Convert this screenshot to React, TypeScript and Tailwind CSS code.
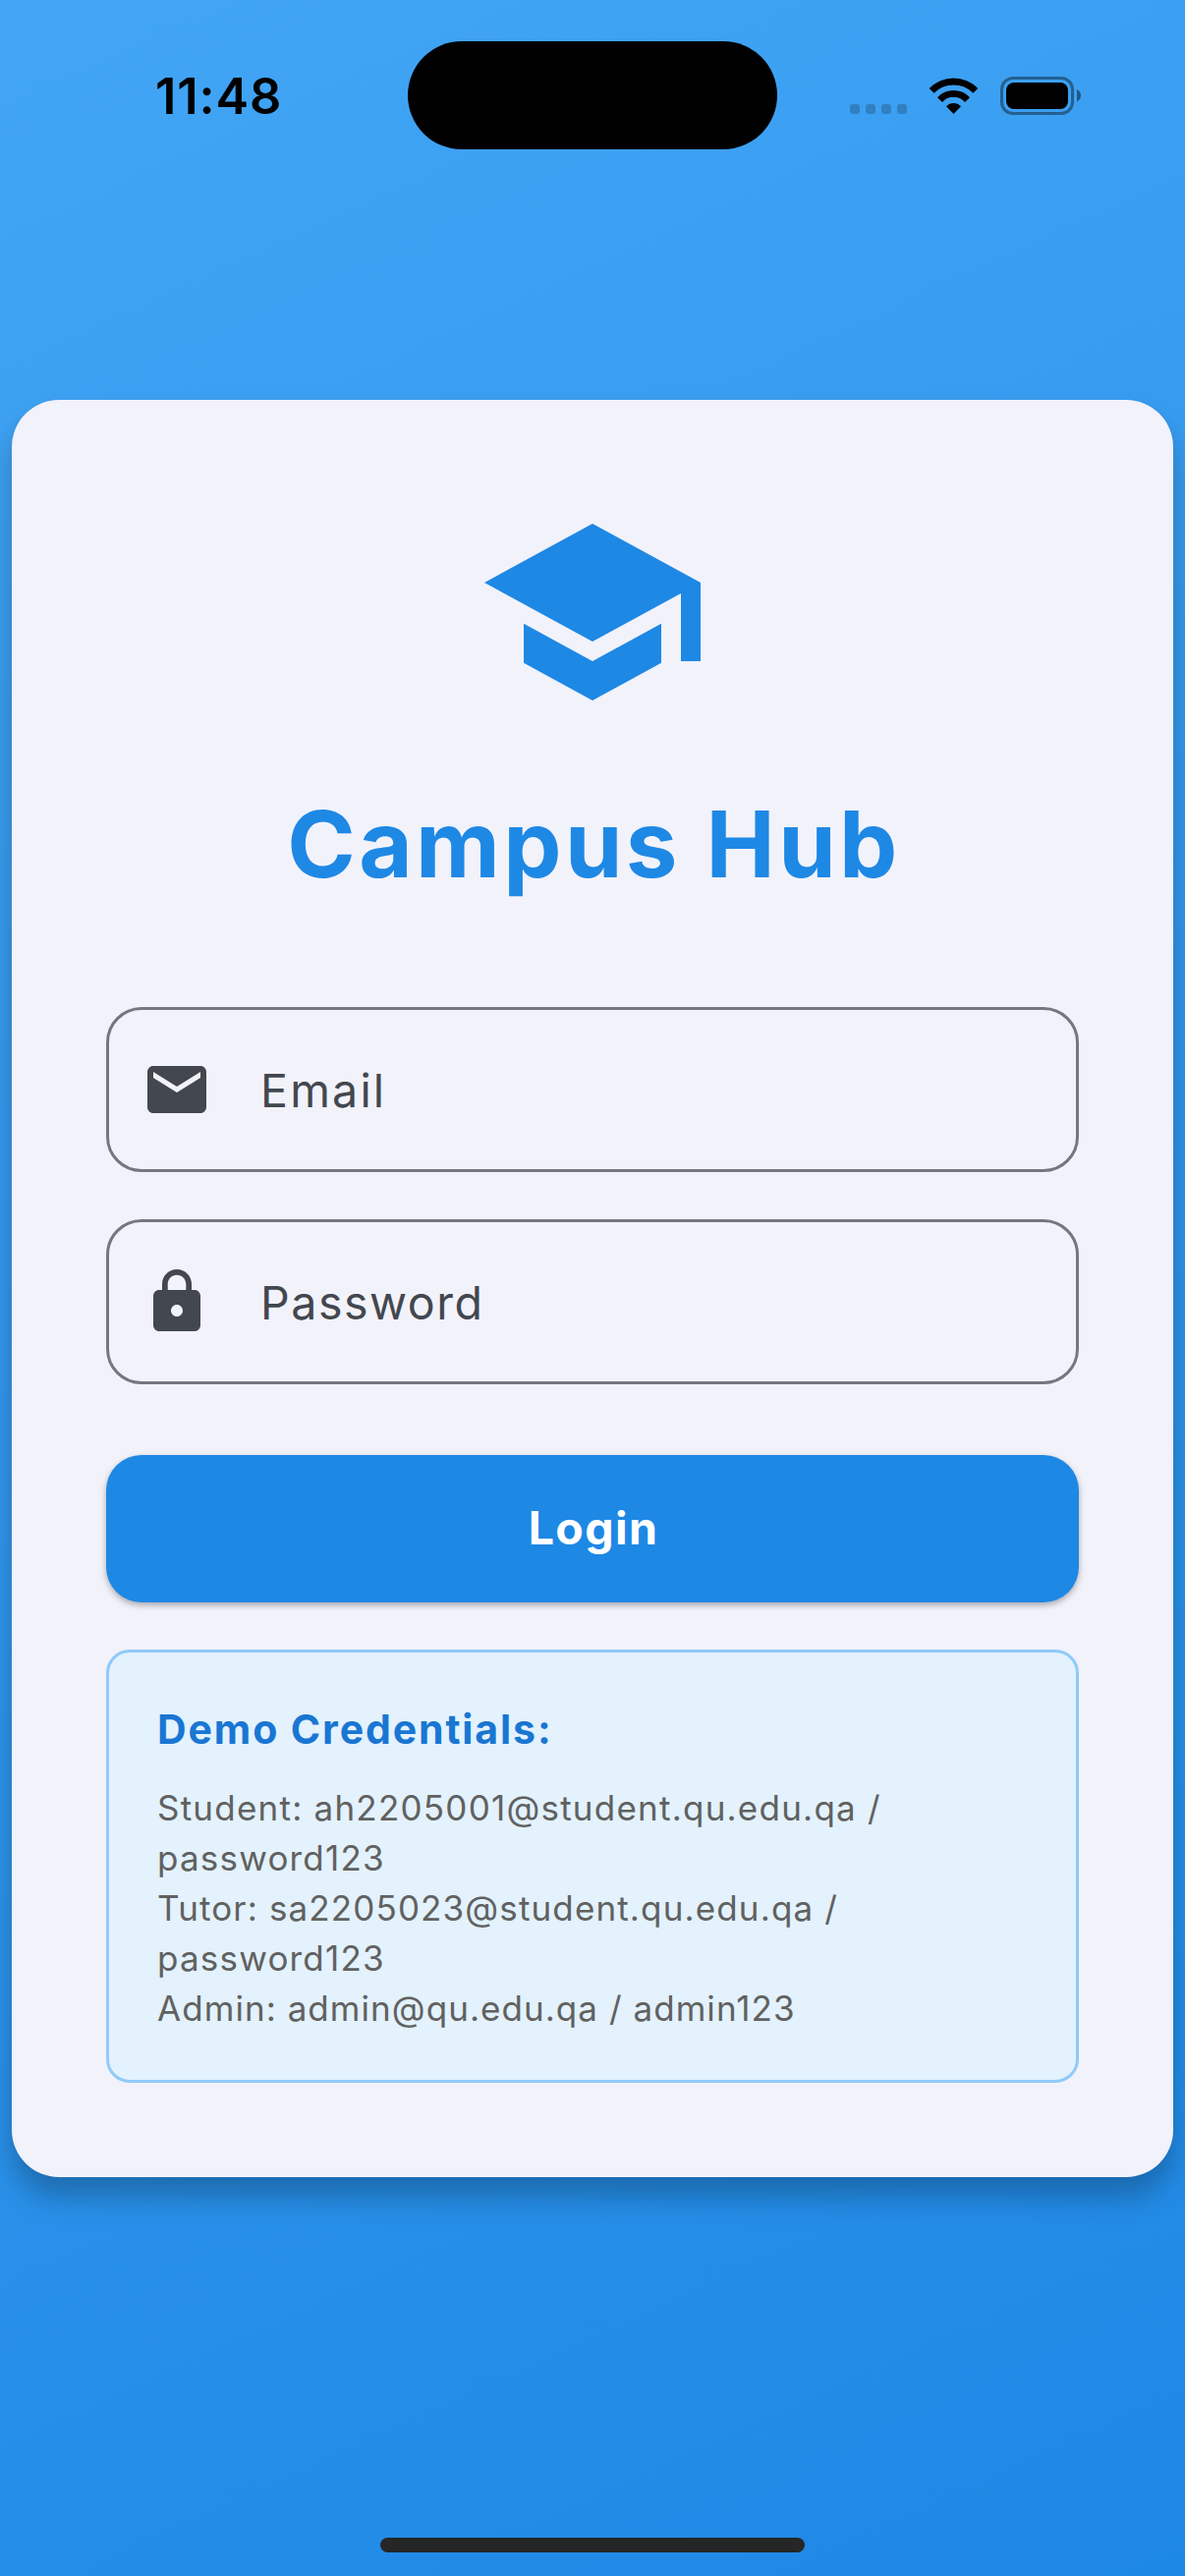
import React from "react";

function StatusBar() {
  return (
    <header className="mt-[42px] flex h-[110px] items-center">
      <time className="w-[415px] pt-[2px] pl-[158px] text-[50.5px] leading-none font-semibold tracking-[0.9px] text-black">
        11:48
      </time>
      <div className="h-[110px] w-[376px] rounded-full bg-black" />
      <div className="ml-[74px] flex items-center">
        <div className="mt-[28px] flex gap-[6px]">
          <span className="size-[10px] rounded-[3px] bg-black/20" />
          <span className="size-[10px] rounded-[3px] bg-black/20" />
          <span className="size-[10px] rounded-[3px] bg-black/20" />
          <span className="size-[10px] rounded-[3px] bg-black/20" />
        </div>
        <svg className="ml-[22px] h-[38px] w-[51px]" viewBox="0 0 51 38">
          <path d="M.7 12A34.3 34.3 0 0 1 50.3 12L45.3 16.8A27.5 27.5 0 0 0 5.7 16.8Z" />
          <path d="M9 21.3A22.2 22.2 0 0 1 42 21.3L37 26A15 15 0 0 0 14 26Z" />
          <path d="M18 30.3A10 10 0 0 1 33 30.3L25.5 38Z" />
        </svg>
        <svg className="ml-[22px] h-[39px] w-[82px]" viewBox="0 0 82 39">
          <rect x="1.5" y="1.5" width="72" height="36" rx="11.5" fill="none" stroke="black" strokeOpacity=".4" strokeWidth="3" />
          <rect x="6" y="6" width="63" height="27" rx="8" />
          <path d="M78 13Q82 15 82 19T78 25.5Z" fillOpacity=".45" />
        </svg>
      </div>
    </header>
  );
}

function SchoolIcon() {
  return (
    <svg className="mx-auto size-60" viewBox="0 0 24 24" fill="#1E88E5">
      <path d="M5 13.18v4L12 21l7-3.82v-4L12 17l-7-3.82zM12 3L1 9l11 6 9-4.91V17h2V9L12 3z" />
    </svg>
  );
}

const fieldIcons = {
  mail: "M20 4H4c-1.1 0-1.99.9-1.99 2L2 18c0 1.1.9 2 2 2h16c1.1 0 2-.9 2-2V6c0-1.1-.9-2-2-2zm0 4l-8 5-8-5V6l8 5 8-5v2z",
  lock: "M18 8h-1V6c0-2.76-2.24-5-5-5S7 3.24 7 6v2H6c-1.1 0-2 .9-2 2v10c0 1.1.9 2 2 2h12c1.1 0 2-.9 2-2V10c0-1.1-.9-2-2-2zm-6 9c-1.1 0-2-.9-2-2s.9-2 2-2 2 .9 2 2-.9 2-2 2zm3.1-9H8.9V6c0-1.71 1.39-3.1 3.1-3.1 1.71 0 3.1 1.39 3.1 3.1v2z",
};

function Field({ icon, children }: { icon: keyof typeof fieldIcons; children: React.ReactNode }) {
  return (
    <label className="flex h-[168px] items-center rounded-[36px] border-3 border-[#73777F] pl-[33px] text-[46.5px] leading-none text-[#43474E]">
      <svg className="size-[72px]" viewBox="0 0 24 24" fill="#43474E">
        <path d={fieldIcons[icon]} />
      </svg>
      {children}
    </label>
  );
}

export default function App() {
  return (
    <div className="flex h-[2622px] w-[1206px] flex-col overflow-hidden bg-[linear-gradient(155.3deg,#42A5F5,#1E88E5)] font-['Inter',sans-serif]">
      <StatusBar />
      <main className="mx-3 mt-[255px] flex h-[1809px] flex-col rounded-[48px] bg-[#F2F2FB] p-24 shadow-[0_20px_30px_rgba(0,0,0,0.25)]">
        <SchoolIcon />
        <h1 className="mt-[68px] h-24 pl-[3px] text-center text-[94px] leading-[96px] font-bold tracking-[3.4px] text-[#1E88E5]">
          Campus Hub
        </h1>
        <form className="mt-[118px] flex flex-col gap-12">
          <Field icon="mail">
            <span className="ml-[49px] pt-[3px] tracking-[2.2px]">Email</span>
          </Field>
          <Field icon="lock">
            <span className="ml-[49px] pt-[3px] tracking-[1.55px]">Password</span>
          </Field>
          <button
            type="button"
            className="mt-6 h-[150px] rounded-[36px] bg-[#1E88E5] pl-[2px] text-[46.5px] font-bold tracking-[1.4px] text-white shadow-[0_3px_6px_rgba(0,0,0,0.3)]"
          >
            Login
          </button>
        </form>
        <section className="mt-12 h-[441px] rounded-3xl border-3 border-[#90CAF9] bg-[#E3F2FD] px-[49px] pt-[48px] text-[35px] leading-[51px] text-[#616161]">
          <h2 className="mb-[25px] text-[41px] leading-[60px] font-bold tracking-[1.9px] text-[#1976D2]">Demo Credentials:</h2>
          <p className="tracking-[1.23px]">Student: ah2205001@student.qu.edu.qa /</p>
          <p className="tracking-[1.2px]">password123</p>
          <p className="tracking-[1.14px]">Tutor: sa2205023@student.qu.edu.qa /</p>
          <p className="tracking-[1.2px]">password123</p>
          <p className="tracking-[1.05px]">Admin: admin@qu.edu.qa / admin123</p>
        </section>
      </main>
      <div className="mx-auto mt-auto mb-6 h-[15px] w-[432px] rounded-full bg-[#262626]" />
    </div>
  );
}
